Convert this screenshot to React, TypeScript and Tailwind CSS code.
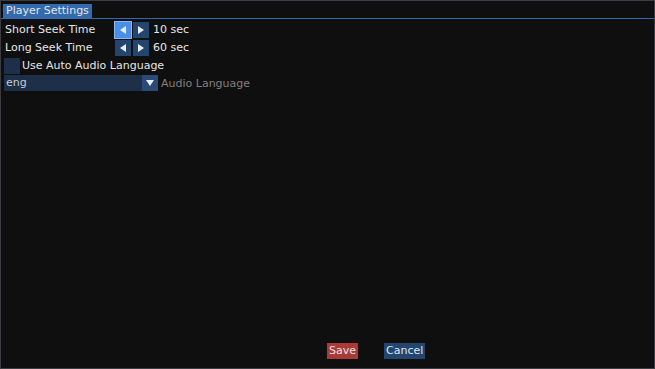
import { useState } from "react";

function Arrow({ dir }: { dir: "left" | "right" | "down" }) {
  const pts = dir === "left" ? "9,4 9,12 3,8" : dir === "right" ? "3,4 3,12 9,8" : "2,5 10,5 6,11";
  return (
    <svg width="12" height="16" viewBox="0 0 12 16" className="block">
      <polygon points={pts} fill="#e8eef6" />
    </svg>
  );
}

function Stepper({ label, value, hot }: { label: string; value: string; hot?: boolean }) {
  return (
    <div className="flex h-[17px] items-center">
      <span className="w-[110px] pl-1">{label}</span>
      <div className="ml-[4px] flex gap-[2px]">
        <button
          className={
            hot
              ? "flex h-[16px] w-[16px] items-center justify-center bg-[#4a8fe6] outline outline-1 outline-[#8ab8f0]"
              : "flex h-[16px] w-[16px] items-center justify-center bg-[#24456d]"
          }
        >
          <Arrow dir="left" />
        </button>
        <button className="flex h-[16px] w-[16px] items-center justify-center bg-[#24456d]">
          <Arrow dir="right" />
        </button>
      </div>
      <span className="ml-[4px]">{value}</span>
    </div>
  );
}

export default function App() {
  const [auto, setAuto] = useState(false);
  return (
    <div
      className="flex h-[369px] w-[655px] flex-col border border-[#3b3b42] bg-[#0f0f0f] text-[11px] leading-[15px] text-[#e6e6e6]"
      style={{ fontFamily: '"DejaVu Sans", sans-serif' }}
    >
      <div className="flex h-[18px] items-end border-b border-[#3369ad] pl-[2px]">
        <div className="h-[14px] bg-[#3369ad] px-[3px] leading-[14px]">Player Settings</div>
      </div>
      <div className="flex flex-col gap-[1px] pt-[2px]">
        <Stepper label="Short Seek Time" value="10 sec" hot />
        <Stepper label="Long Seek Time" value="60 sec" />
        <label className="flex h-[17px] items-center pl-[3px]">
          <span
            onClick={() => setAuto(!auto)}
            className="h-[16px] w-[16px] bg-[#1d2f49]"
          />
          <span className="ml-[2px]">Use Auto Audio Language</span>
        </label>
        <div className="flex h-[16px] items-center pl-[3px]">
          <div className="flex h-[16px] w-[154px] bg-[#1d2f49]">
            <span className="flex-1 pl-[2px] leading-[16px] text-[#c8ccd2]">eng</span>
            <span className="flex w-[16px] items-center justify-center bg-[#2a4b76]">
              <Arrow dir="down" />
            </span>
          </div>
          <span className="ml-[3px] text-[#808080]">Audio Language</span>
        </div>
      </div>
      <div className="mt-auto mb-[9px] flex pl-[326px]">
        <button className="h-[16px] bg-[#a83a3a] px-[2px] leading-[16px] text-[#f0e0e0]">Save</button>
        <button className="ml-[26px] h-[16px] bg-[#24456d] px-[2px] leading-[16px] text-[#dfe8f4]">Cancel</button>
      </div>
    </div>
  );
}
